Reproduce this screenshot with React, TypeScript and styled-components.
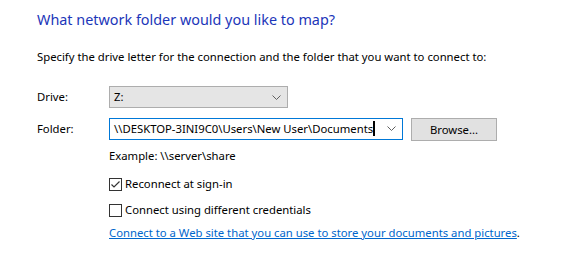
import React from "react";
import styled, { createGlobalStyle } from "styled-components";

const GlobalStyle = createGlobalStyle`
  html, body {
    margin: 0;
    padding: 0;
    background: #ffffff;
  }
  body {
    font-family: "Noto Sans", "Open Sans", "Liberation Sans", sans-serif;
    font-size: 11.3px;
    color: #000000;
  }
`;

const Page = styled.div`
  width: 574px;
  height: 269px;
  box-sizing: border-box;
  padding: 9px 0 0 37px;
  display: flex;
  flex-direction: column;
  overflow: hidden;
`;

const Title = styled.h1`
  margin: 0;
  font-size: 14.4px;
  font-weight: 400;
  line-height: 22px;
  color: #1c36b9;
`;

const Intro = styled.p`
  margin: 18px 0 0;
  line-height: 16px;
`;

const Form = styled.div`
  display: grid;
  grid-template-columns: 72px auto;
  row-gap: 8px;
  margin-top: 21px;
  align-items: center;
`;

const Label = styled.label`
  line-height: 16px;
`;

const Row = styled.div`
  display: flex;
  align-items: center;
  gap: 8px;
`;

const Combo = styled.div<{ $width: number; $editable?: boolean }>`
  box-sizing: border-box;
  width: ${(p) => p.$width}px;
  height: 22px;
  display: flex;
  align-items: center;
  padding: 0 6px 0 4px;
  border: 1px solid ${(p) => (p.$editable ? "#0078d7" : "#adadad")};
  background: ${(p) => (p.$editable ? "#ffffff" : "#e5e5e5")};
`;

const ComboText = styled.span`
  flex: 1;
  white-space: nowrap;
  line-height: 16px;
`;

const Caret = styled.span`
  display: inline-block;
  width: 2px;
  height: 15px;
  background: #000;
  vertical-align: -3px;
`;

const Chevron = styled.svg`
  width: 9px;
  height: 5px;
  flex: none;
`;

const Button = styled.button`
  box-sizing: border-box;
  width: 86px;
  height: 23px;
  margin-top: 2px;
  border: 1px solid #adadad;
  background: #e1e1e1;
  font: inherit;
  color: #000;
  padding: 0;
`;

const Options = styled.div`
  display: flex;
  flex-direction: column;
  margin-left: 72px;
  margin-top: 7px;
`;

const Example = styled.div`
  line-height: 16px;
  margin-bottom: 2px;
`;

const Check = styled.label`
  display: flex;
  align-items: center;
  gap: 3px;
  margin-top: 10px;
  line-height: 16px;
`;

const Box = styled.span`
  box-sizing: border-box;
  width: 13px;
  height: 13px;
  border: 1px solid #333333;
  background: #fff;
  display: flex;
  align-items: center;
  justify-content: center;
`;

const Link = styled.div`
  margin-top: 7px;
  line-height: 16px;
  white-space: nowrap;
  a {
    color: #0066cc;
    text-decoration: underline;
  }
`;

const ChevronDown = () => (
  <Chevron viewBox="0 0 9 5">
    <path d="M0.5 0.5 L4.5 4.5 L8.5 0.5" fill="none" stroke="#606060" strokeWidth="1" />
  </Chevron>
);

const Checkbox = ({ checked, label }: { checked?: boolean; label: string }) => (
  <Check>
    <Box>
      {checked && (
        <svg width="11" height="11" viewBox="0 0 11 11">
          <path d="M1.5 5.5 L4 8 L9.5 2.5" fill="none" stroke="#333" strokeWidth="1.2" />
        </svg>
      )}
    </Box>
    {label}
  </Check>
);

const App = () => {
  return (
    <>
      <GlobalStyle />
      <Page>
        <Title>What network folder would you like to map?</Title>
        <Intro>
          Specify the drive letter for the connection and the folder that you want to connect to:
        </Intro>
        <Form>
          <Label>Drive:</Label>
          <Row>
            <Combo $width={179}>
              <ComboText>Z:</ComboText>
              <ChevronDown />
            </Combo>
          </Row>
          <Label>Folder:</Label>
          <Row>
            <Combo $width={294} $editable>
              <ComboText>
                \\DESKTOP-3INI9C0\Users\New User\Documents
                <Caret />
              </ComboText>
              <ChevronDown />
            </Combo>
            <Button>Browse...</Button>
          </Row>
        </Form>
        <Options>
          <Example>Example: \\server\share</Example>
          <Checkbox checked label="Reconnect at sign-in" />
          <Checkbox label="Connect using different credentials" />
          <Link>
            <a href="#">Connect to a Web site that you can use to store your documents and pictures</a>.
          </Link>
        </Options>
      </Page>
    </>
  );
};

export default App;
